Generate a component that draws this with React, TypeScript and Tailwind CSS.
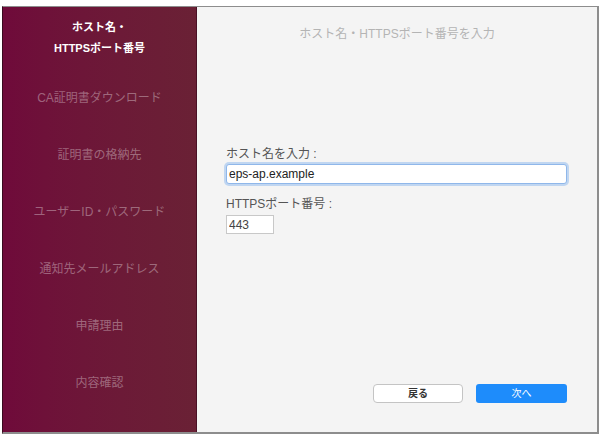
import React, { useState } from 'react';

const steps = [
  'CA証明書ダウンロード',
  '証明書の格納先',
  'ユーザーID・パスワード',
  '通知先メールアドレス',
  '申請理由',
  '内容確認',
];

const font = { fontFamily: '"Liberation Sans", "Noto Sans CJK JP", sans-serif' };

const App: React.FC = () => {
  const [host, setHost] = useState('eps-ap.example');
  const [port, setPort] = useState('443');

  return (
    <div className="w-[603px] h-[439px] bg-white pt-[6px] pl-[2px]" style={font}>
      <div className="flex w-[597px] h-[428px] border border-[#8d8d8d] border-r-2 border-b-2 border-l-[#3a0a1e]">
        {/* sidebar */}
        <div className="w-[194px] shrink-0 flex flex-col bg-gradient-to-r from-[#6f0a3a] to-[#6a2135] border-r border-[#4a1025]">
          <div className="h-[62px] flex flex-col items-center justify-center text-white font-bold text-[11px] leading-[21px]">
            <span>ホスト名・</span>
            <span>HTTPSポート番号</span>
          </div>
          {steps.map((s) => (
            <div key={s} className="h-[57px] flex items-center justify-center text-[12px] text-white/35">
              {s}
            </div>
          ))}
        </div>

        {/* main */}
        <div className="flex-1 flex flex-col bg-[#f4f4f4]">
          <div className="pt-[19px] text-center text-[12px] leading-[17px] text-[#b4b4b4]">
            ホスト名・HTTPSポート番号を入力
          </div>

          <div className="mt-[103px] pl-[29px] pr-[30px] flex flex-col">
            <label className="text-[12px] leading-[16px] text-[#555]">ホスト名を入力 :</label>
            <input
              value={host}
              onChange={(e) => setHost(e.target.value)}
              className="mt-[2px] h-[20px] w-full bg-white border border-[#8fb7ea] rounded-[3px] px-[2px] text-[12px] text-[#222] outline-none ring-2 ring-[#a9c9f0]/70"
            />
            <label className="mt-[12px] text-[12px] leading-[16px] text-[#555]">HTTPSポート番号 :</label>
            <input
              value={port}
              onChange={(e) => setPort(e.target.value)}
              className="mt-[3px] h-[19px] w-[48px] bg-white border border-[#c8c8c8] px-[2px] text-[12px] text-[#444] outline-none"
            />
          </div>

          <div className="mt-auto mb-[29px] flex justify-end gap-[13px] pr-[30px]">
            <button className="w-[90px] h-[19px] rounded-[4px] bg-white border border-[#c4c4c4] text-[10px] text-[#333] font-bold">
              戻る
            </button>
            <button className="w-[91px] h-[19px] rounded-[3px] bg-[#1e8cfb] text-[10px] text-white">
              次へ
            </button>
          </div>
        </div>
      </div>
    </div>
  );
};

export default App;
